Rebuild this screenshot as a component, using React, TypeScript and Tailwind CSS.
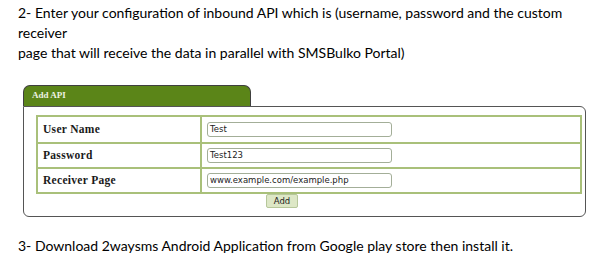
import React from "react";

const rows = [
  { label: "User Name", value: "Test" },
  { label: "Password", value: "Test123" },
  { label: "Receiver Page", value: "www.example.com/example.php" },
];

export default function App() {
  return (
    <div className="w-[615px] h-[271px] bg-white overflow-hidden">
      <div
        className="pl-[18px] pt-[3px] text-[14px] leading-[20px] text-black"
        style={{ fontFamily: "Lato, 'Open Sans', sans-serif" }}
      >
        <div>2- Enter your configuration of inbound API which is (username, password and the custom</div>
        <div>receiver</div>
        <div>page that will receive the data in parallel with SMSBulko Portal)</div>
      </div>

      <div className="ml-[23px] mt-[22px] w-[563px]">
        <div className="w-[228px] h-[21px] bg-[#5b8518] border border-b-0 border-[#3f3f3f] rounded-t-[7px] flex items-center pl-[8px]">
          <span
            className="text-[9px] font-bold text-[#eef2e2]"
            style={{ fontFamily: "'Liberation Serif', serif" }}
          >
            Add API
          </span>
        </div>
        <div className="h-[111px] border border-[#555] rounded-tr-[6px] rounded-b-[6px] pl-[12px] pt-[8px]">
          <div className="w-[546px] border-2 border-[#a9c07a]">
            {rows.map((r, i) => (
              <div
                key={r.label}
                className={`flex h-[25px] ${i > 0 ? "border-t-2 border-[#a9c07a]" : ""}`}
              >
                <div
                  className="w-[164px] border-r-2 border-[#a9c07a] flex items-center pl-[5px] text-[11.5px] font-bold text-[#1a1a1a] tracking-[0.3px]"
                  style={{ fontFamily: "'Liberation Serif', serif" }}
                >
                  {r.label}
                </div>
                <div className="flex items-center pl-[5px]">
                  <div
                    className="w-[185px] h-[15px] border border-[#a3ae98] rounded-[3px] flex items-center pl-[2px] text-[8.5px] text-[#222]"
                    style={{ fontFamily: "'DejaVu Sans', Verdana, sans-serif" }}
                  >
                    {r.value}
                  </div>
                </div>
              </div>
            ))}
          </div>
          <div className="ml-[230px] w-[32px] h-[14px] bg-[#dde7c6] border border-[#b6c79a] rounded-[2px] flex items-center justify-center text-[8.5px] text-[#222]"
            style={{ fontFamily: "'DejaVu Sans', Verdana, sans-serif" }}
          >
            Add
          </div>
        </div>
      </div>

      <div
        className="pl-[18px] mt-[19px] text-[14px] leading-[20px] text-black"
        style={{ fontFamily: "Lato, 'Open Sans', sans-serif" }}
      >
        3- Download 2waysms Android Application from Google play store then install it.
      </div>
    </div>
  );
}
